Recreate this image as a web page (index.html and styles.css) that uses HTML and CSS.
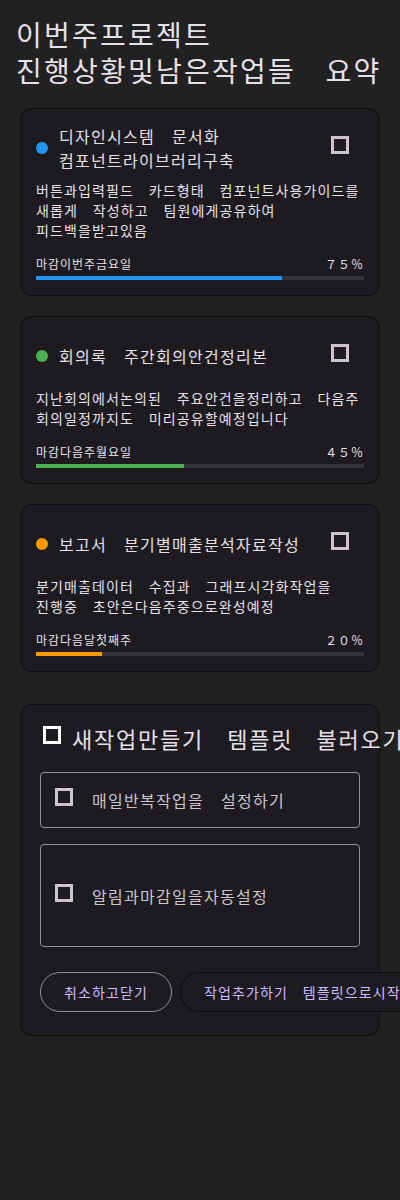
FILE: index.html
```html
<!DOCTYPE html>
<html lang="ko">
<head>
<meta charset="utf-8">
<title>이번주 프로젝트</title>
<link rel="stylesheet" href="styles.css">
</head>
<body>
<main class="page">
  <h1 class="page-title">이번주프로젝트 진행상황및남은작업들 요약</h1>

  <section class="task-list">
    <article class="task-card">
      <div class="task-head">
        <span class="dot dot-blue"></span>
        <h2 class="task-title">디자인시스템 문서화 컴포넌트라이브러리구축</h2>
        <span class="cb-wrap"><span class="cb"></span></span>
      </div>
      <p class="task-desc">버튼과입력필드 카드형태 컴포넌트사용가이드를 새롭게 작성하고 팀원에게공유하여 피드백을받고있음</p>
      <div class="task-meta"><span>마감이번주금요일</span><span>７５％</span></div>
      <div class="track"><div class="fill fill-blue" style="width:75%"></div></div>
    </article>

    <article class="task-card">
      <div class="task-head">
        <span class="dot dot-green"></span>
        <h2 class="task-title">회의록 주간회의안건정리본</h2>
        <span class="cb-wrap"><span class="cb"></span></span>
      </div>
      <p class="task-desc">지난회의에서논의된 주요안건을정리하고 다음주 회의일정까지도 미리공유할예정입니다</p>
      <div class="task-meta"><span>마감다음주월요일</span><span>４５％</span></div>
      <div class="track"><div class="fill fill-green" style="width:45%"></div></div>
    </article>

    <article class="task-card">
      <div class="task-head">
        <span class="dot dot-orange"></span>
        <h2 class="task-title">보고서 분기별매출분석자료작성</h2>
        <span class="cb-wrap"><span class="cb"></span></span>
      </div>
      <p class="task-desc">분기매출데이터 수집과 그래프시각화작업을 진행중 초안은다음주중으로완성예정</p>
      <div class="task-meta"><span>마감다음달첫째주</span><span>２０％</span></div>
      <div class="track"><div class="fill fill-orange" style="width:20%"></div></div>
    </article>
  </section>

  <section class="new-card">
    <div class="new-head">
      <span class="cb cb-white"></span>
      <h2 class="new-title">새작업만들기 템플릿 불러오기</h2>
    </div>
    <div class="options">
      <label class="option">
        <span class="cb"></span>
        <span class="option-text">매일반복작업을 설정하기</span>
      </label>
      <label class="option option-tall">
        <span class="cb"></span>
        <span class="option-text">알림과마감일을자동설정</span>
      </label>
    </div>
    <div class="actions">
      <button class="btn btn-outline">취소하고닫기</button>
      <button class="btn btn-dark">작업추가하기 템플릿으로시작하기</button>
    </div>
  </section>
</main>
</body>
</html>
```

FILE: styles.css
```css
* {
  box-sizing: border-box;
}

html, body {
  margin: 0;
  padding: 0;
  background: #212121;
}

body {
  font-family: "Noto Sans CJK KR", "Noto Sans", sans-serif;
  color: #e6e0e9;
  word-break: keep-all;
}

.page-title,
.task-title,
.task-desc,
.task-meta,
.new-title,
.option-text,
.btn {
  letter-spacing: 0.08em;
  word-spacing: 0.696em;
}

.page {
  padding: 16px 16px 40px;
  display: flex;
  flex-direction: column;
}

.page-title {
  margin: 0;
  font-size: 28px;
  line-height: 36px;
  font-weight: 400;
}

.task-list {
  margin: 20px 4px 0;
  display: flex;
  flex-direction: column;
  gap: 20px;
}

.task-card {
  background: #1d1b20;
  border: 1px solid #0f0f11;
  border-radius: 12px;
  padding: 15px;
}

.task-head {
  display: flex;
  align-items: center;
  min-height: 48px;
}

.dot {
  width: 12px;
  height: 12px;
  border-radius: 50%;
  flex-shrink: 0;
  margin-right: 11px;
}

.dot-blue { background: #2196f3; }
.dot-green { background: #4caf50; }
.dot-orange { background: #ff9800; }

.task-title {
  margin: 0;
  flex: 1;
  font-size: 16px;
  line-height: 24px;
  font-weight: 400;
}

.cb-wrap {
  width: 48px;
  height: 48px;
  flex-shrink: 0;
  display: flex;
  align-items: center;
  justify-content: center;
}

.cb {
  display: block;
  width: 18px;
  height: 18px;
  border: 3px solid #cac4d0;
  margin: 0 3px 6px;
  flex-shrink: 0;
}

.cb-white {
  border-color: #ffffff;
}

.task-desc {
  margin: 8px 0 0;
  font-size: 14px;
  line-height: 20px;
}

.task-meta {
  margin-top: 16px;
  display: flex;
  justify-content: space-between;
  font-size: 12px;
  line-height: 16px;
}

.track {
  margin-top: 4px;
  height: 4px;
  background: #36343b;
}

.fill {
  height: 100%;
}

.fill-blue { background: #2196f3; }
.fill-green { background: #4caf50; }
.fill-orange { background: #ff9800; }

.new-card {
  margin: 32px 4px 0;
  background: #1d1b20;
  border: 1px solid #0f0f11;
  border-radius: 12px;
  padding: 19px 19px 23px;
}

.new-head {
  display: flex;
  align-items: center;
  white-space: nowrap;
}

.new-head .cb {
  margin-right: 11px;
}

.new-title {
  margin: 0;
  font-size: 22px;
  line-height: 28px;
  font-weight: 400;
  flex-shrink: 0;
}

.options {
  margin-top: 20px;
  display: flex;
  flex-direction: column;
  gap: 16px;
}

.option {
  display: flex;
  align-items: center;
  min-height: 56px;
  padding: 0 11px;
  border: 1px solid #938f99;
  border-radius: 4px;
  color: #cac4d0;
}

.option-tall {
  min-height: 103px;
}

.option .cb {
  margin-right: 19px;
}

.option-text {
  font-size: 16px;
  line-height: 24px;
}

.actions {
  margin-top: 25px;
  display: flex;
  gap: 8px;
  white-space: nowrap;
}

.btn {
  flex-shrink: 0;
  height: 40px;
  padding: 0 23px;
  border-radius: 20px;
  font-family: inherit;
  font-size: 14px;
  line-height: 20px;
  color: #d0bcff;
  background: #1d1b20;
}

.btn-outline {
  border: 1px solid #938f99;
}

.btn-dark {
  border: 1px solid #0c0c0e;
}
```
